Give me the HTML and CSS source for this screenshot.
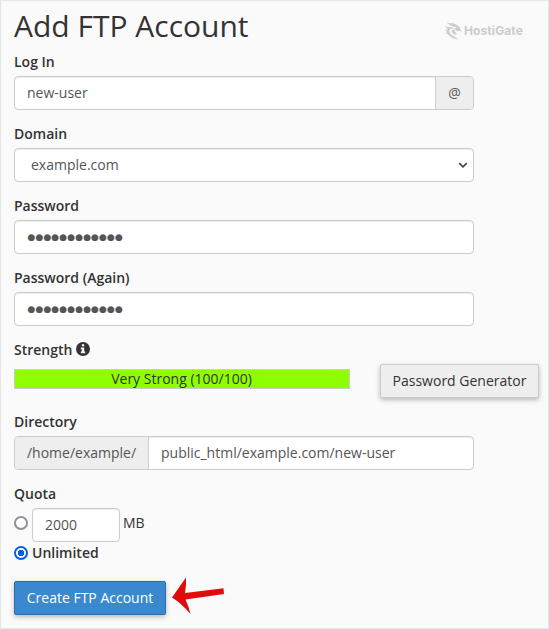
FILE: index.html
```
<!DOCTYPE html>
<html lang="en">
<head>
<meta charset="utf-8">
<title>Add FTP Account</title>
<link rel="stylesheet" href="styles.css">
</head>
<body>
<main class="panel">
  <header class="header">
    <h1>Add FTP Account</h1>
    <div class="brand">
      <svg class="brand-mark" width="17" height="18" viewBox="0 0 17 18" aria-hidden="true">
        <path d="M2 0C4 2 8 .5 11 2.500C14 4 15.500 6 16.500 10L14.500 8.500L12.500 9.500L11 8L8 6.500L12 6C9 4 4 4.500 2 0Z"/>
        <path d="M0 4C3 6 6 4.500 9 6C5 6.500 4 8 4.500 10C5.500 13.500 10 14 13 17.500C8 16.500 4 14.500 3 12L.5 11.500L2.500 10L0 8L3 7.500Z"/>
        <path d="M7 7.500C6 10 8 12.500 12 13.500L10 11L13 12C10.500 10.500 9.500 9.500 9.500 8Z"/>
      </svg>
      <span>HostiGate</span>
    </div>
  </header>
  <form class="form">
    <section class="group">
      <label class="label" for="login">Log In</label>
      <div class="field joined">
        <input class="input" id="login" type="text" value="new-user">
        <span class="addon at">@</span>
      </div>
    </section>
    <section class="group">
      <label class="label" for="domain">Domain</label>
      <div class="field select" id="domain">
        <span>example.com</span>
        <svg width="10" height="7" viewBox="0 0 10 7" aria-hidden="true"><path d="M1.2 1.2L5 4.8L8.8 1.2"/></svg>
      </div>
    </section>
    <section class="group">
      <span class="label">Password</span>
      <div class="field dots">●●●●●●●●●●●●</div>
    </section>
    <section class="group">
      <span class="label">Password (Again)</span>
      <div class="field dots">●●●●●●●●●●●●</div>
    </section>
    <section class="group">
      <span class="label">Strength
        <svg class="info" width="14" height="14" viewBox="0 0 14 14" aria-hidden="true"><circle cx="7" cy="7" r="7"/><path d="M5.8 2.2h2.4v2H5.8zM4.8 5.5h3.4v4h1v1.8H4.8V9.500h1V7.200h-1z"/></svg>
      </span>
      <div class="strength">
        <div class="meter">Very Strong (100/100)</div>
        <button class="button" type="button">Password Generator</button>
      </div>
    </section>
    <section class="group">
      <label class="label" for="directory">Directory</label>
      <div class="field joined">
        <span class="addon path">/home/example/</span>
        <input class="input" id="directory" type="text" value="public_html/example.com/new-user">
      </div>
    </section>
    <section class="quota">
      <span class="label">Quota</span>
      <div class="option"><i class="radio"></i><input class="field amount" type="text" value="2000"><span class="unit">MB</span></div>
      <div class="option unlimited"><i class="radio checked"></i><b>Unlimited</b></div>
    </section>
    <div class="actions">
      <button class="button primary" type="button">Create FTP Account</button>
      <svg class="arrow" width="54" height="38" viewBox="0 0 54 38" aria-hidden="true"><path d="M1 20.500L15 0.500Q15.500 8 14 16L52.500 11.200L53 17L14.500 22.500Q18 30 19.500 37Q10 26 1 20.500Z"/></svg>
    </div>
  </form>
</main>
</body>
</html>
```
FILE: styles.css
```
* { box-sizing: border-box; }
body {
  margin: 0;
  background: #fafafa;
  color: #333;
  font: 14px/20px "Open Sans", sans-serif;
}
.panel {
  height: 629px;
  padding: 0 13px;
  border: 1px solid #e6e6e6;
  overflow: hidden;
}
.header {
  display: flex;
  justify-content: space-between;
  height: 51px;
  padding-right: 12px;
}
h1 {
  margin: 8px 0 0;
  font-size: 30px;
  font-weight: 400;
  line-height: 34px;
}
.brand {
  display: flex;
  gap: 2px;
  margin-top: 21px;
  height: 18px;
  color: #cbcbcb;
  font: 700 12px/18px Inter, sans-serif;
  letter-spacing: .1px;
}
.brand-mark { fill: #cbcbcb; }
.form { width: 460px; }
.group { height: 72px; }
.label {
  display: block;
  height: 24px;
  font-weight: 600;
}
.field {
  width: 100%;
  height: 34px;
  border: 1px solid #ccc;
  border-radius: 4px;
  background: #fff;
  color: #555;
  box-shadow: inset 0 1px 1px rgba(0, 0, 0, .075);
}
.joined { display: flex; overflow: hidden; }
.input {
  flex: 1;
  min-width: 0;
  padding: 0 12px;
  border: 0;
  background: transparent;
  color: inherit;
  font: inherit;
}
.addon {
  background: #eee;
  line-height: 32px;
  text-align: center;
}
.at { width: 38px; border-left: 1px solid #ccc; }
.path { width: 134px; border-right: 1px solid #ccc; }
.select {
  display: flex;
  align-items: center;
  justify-content: space-between;
  padding: 0 5px 0 16px;
}
.select svg { fill: none; stroke: #444; stroke-width: 1.7; }
.dots {
  padding-left: 12.500px;
  font: 9px/33px "DejaVu Sans", sans-serif;
  letter-spacing: .1px;
}
.info { vertical-align: -1px; fill: #333; }
.info path { fill: #fafafa; }
.strength {
  display: flex;
  justify-content: space-between;
  width: 525px;
}
.meter {
  width: 336px;
  height: 20px;
  margin-top: 5px;
  padding-right: 1px;
  border: 1px solid #ccc;
  background: #8eff00;
  line-height: 18px;
  text-align: center;
}
.button {
  width: 159px;
  height: 34px;
  padding: 0;
  border: 1px solid #ccc;
  border-radius: 2px;
  background: #eee;
  color: #333;
  font: inherit;
  box-shadow: 0 2px 5px rgba(0, 0, 0, .26);
}
.option { display: flex; align-items: center; }
.radio {
  flex: none;
  width: 14px;
  height: 14px;
  margin-right: 4px;
  border: 2px solid #8f8f9d;
  border-radius: 50%;
  background: #fff;
}
.option:not(.unlimited) .radio { margin-top: -5px; }
.checked {
  border-color: #0060df;
  background: radial-gradient(circle, #0060df 3px, #fff 3.500px);
}
.amount {
  width: 88px;
  padding: 0 12px 1px;
  font: inherit;
}
.unit { margin: -4px 0 0 3px; }
.unlimited { margin-top: 1px; }
.unlimited b { font-weight: 600; }
.actions { display: flex; margin-top: 18px; }
.primary {
  width: 152px;
  border-color: #2a6cb0;
  background: #3a89cf;
  color: #fff;
}
.arrow { margin: -4px 0 0 5px; fill: #e10b0b; }
```
